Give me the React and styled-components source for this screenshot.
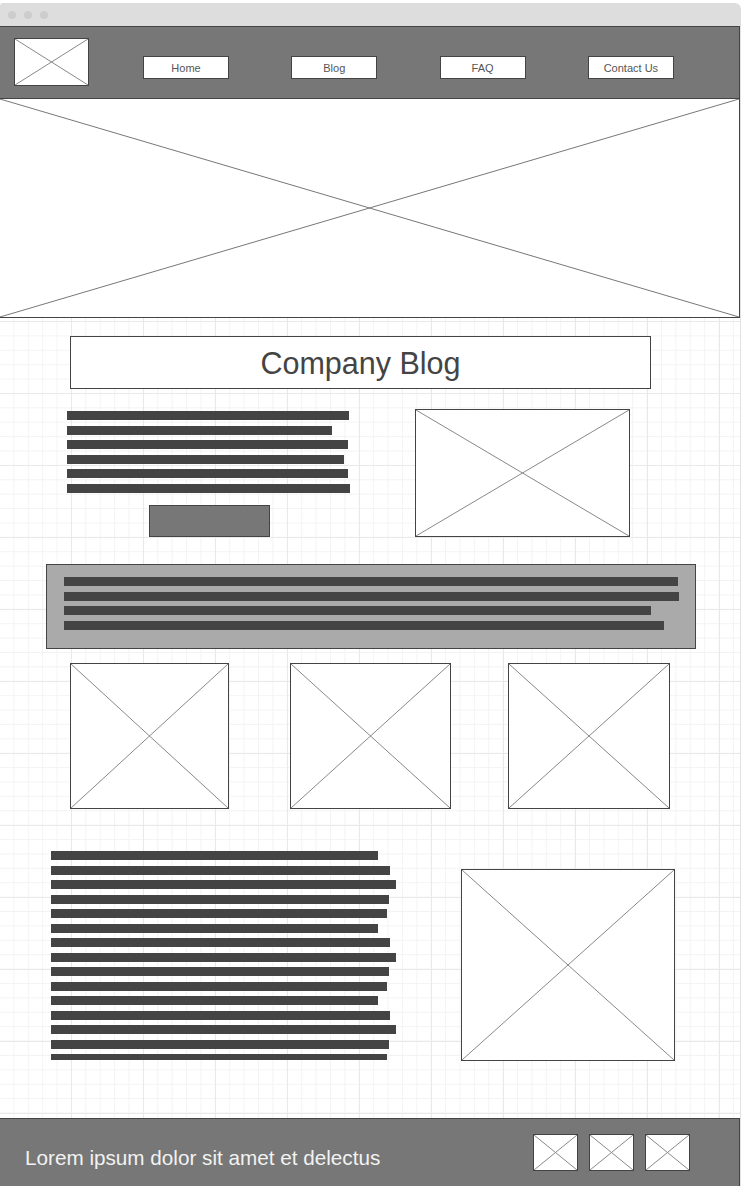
import React from 'react';
import styled, { createGlobalStyle } from 'styled-components';

const GlobalStyle = createGlobalStyle`
  html, body {
    margin: 0;
    padding: 0;
    background: #ffffff;
  }
  body {
    font-family: 'Liberation Sans', Arial, sans-serif;
  }
  * {
    box-sizing: border-box;
  }
`;

const topBars = [282, 265, 281, 277, 281, 283];
const bandBars = [614, 615, 587, 600];
const bottomBars = [327, 339, 345, 338, 336, 327, 339, 345, 338, 336, 327, 339, 345, 338, 336];

const Window = styled.div`
  width: 741px;
  display: flex;
  flex-direction: column;
  padding-top: 3px;
`;

const Chrome = styled.div`
  height: 23px;
  background: #dddddd;
  border-radius: 3px 6px 0 0;
  display: flex;
  align-items: center;
  gap: 8px;
  padding-left: 8px;
`;

const Dot = styled.span`
  width: 8px;
  height: 8px;
  border-radius: 50%;
  background: #cdcdcd;
`;

const Page = styled.div`
  width: 741px;
  border-right: 1px solid #e2e2e2;
  display: flex;
  flex-direction: column;
`;

const Header = styled.header`
  height: 73px;
  background: #777777;
  border: 1px solid #444444;
  border-left: none;
  display: flex;
  align-items: flex-start;
  padding-left: 14px;
`;

const Logo = styled.div`
  width: 75px;
  height: 48px;
  margin-top: 11px;
  margin-right: 54px;
`;

const Nav = styled.nav`
  display: flex;
  gap: 62.3px;
  margin-top: 29px;
`;

const NavButton = styled.div`
  width: 86px;
  height: 23px;
  background: #ffffff;
  border: 1px solid #444444;
  color: #555555;
  font-size: 11px;
  display: flex;
  align-items: center;
  justify-content: center;
`;

const Hero = styled.div`
  height: 219px;
  background: #ffffff;
  border-bottom: 1px solid #444444;
  border-right: 1px solid #444444;
`;

const Canvas = styled.main`
  display: flex;
  flex-direction: column;
  padding: 18px 0 57px;
  background-color: #ffffff;
  background-image:
    linear-gradient(to right, #e9e9e9 1px, transparent 1px),
    linear-gradient(to bottom, #e9e9e9 1px, transparent 1px),
    linear-gradient(to right, #f3f3f3 1px, transparent 1px),
    linear-gradient(to bottom, #f3f3f3 1px, transparent 1px);
  background-size: 72px 72px, 72px 72px, 14.4px 14.4px, 14.4px 14.4px;
  background-position: -1px 3px, -1px 3px, -1px 3px, -1px 3px;
`;

const TitleBox = styled.div`
  margin-left: 70px;
  width: 581px;
  height: 53px;
  background: #ffffff;
  border: 1px solid #444444;
  display: flex;
  align-items: center;
  justify-content: center;
  color: #444444;
  font-size: 30.5px;
  padding-top: 1px;
`;

const IntroRow = styled.section`
  display: grid;
  grid-template-columns: 283px 215px;
  column-gap: 65px;
  margin-top: 20px;
  padding-left: 67px;
`;

const TextColumn = styled.div`
  display: flex;
  flex-direction: column;
  align-items: flex-start;
  gap: ${(p) => p.$gap}px;
  padding-top: ${(p) => p.$top || 0}px;
`;

const Bar = styled.div`
  height: ${(p) => p.$height || 9}px;
  background: #444444;
`;

const ReadMore = styled.div`
  width: 121px;
  height: 32px;
  margin: 6px 0 0 82px;
  background: #777777;
  border: 1px solid #444444;
`;

const Band = styled.section`
  margin: 27px 0 0 46px;
  width: 650px;
  height: 85px;
  background: #aaaaaa;
  border: 1px solid #444444;
  padding: 12px 0 0 17px;
`;

const Gallery = styled.section`
  display: flex;
  align-items: flex-start;
  margin-top: 14px;
  padding-left: 70px;
`;

const StoryRow = styled.section`
  display: grid;
  grid-template-columns: 345px 214px;
  column-gap: 65px;
  align-items: start;
  margin-top: 42px;
  padding-left: 51px;
`;

const Frame = styled.div`
  flex: none;
  width: ${(p) => (p.$w ? `${p.$w}px` : 'auto')};
  height: ${(p) => p.$h}px;
  margin-top: ${(p) => p.$top || 0}px;
  margin-left: ${(p) => p.$left || 0}px;
  background: #ffffff;
  border: 1px solid #444444;
`;

const Footer = styled.footer`
  height: 70px;
  background: #777777;
  border-top: 1px solid #444444;
  border-right: 1px solid #444444;
  display: flex;
  align-items: flex-start;
  justify-content: space-between;
  padding: 0 49px 0 25px;
`;

const FooterText = styled.p`
  margin: 29px 0 0;
  color: #f2f2f2;
  font-size: 20.7px;
  line-height: 20px;
`;

const Socials = styled.div`
  display: flex;
  gap: 11px;
  margin-top: 15px;
`;

function Cross({ color = '#888888' }) {
  return (
    <svg width="100%" height="100%" viewBox="0 0 100 100" preserveAspectRatio="none" style={{ display: 'block' }}>
      <line x1="0" y1="0" x2="100" y2="100" stroke={color} strokeWidth="1" vectorEffect="non-scaling-stroke" />
      <line x1="100" y1="0" x2="0" y2="100" stroke={color} strokeWidth="1" vectorEffect="non-scaling-stroke" />
    </svg>
  );
}

function Placeholder({ w, h, top, left }) {
  return (
    <Frame $w={w} $h={h} $top={top} $left={left}>
      <Cross />
    </Frame>
  );
}

export default function App() {
  return (
    <>
      <GlobalStyle />
      <Window>
        <Chrome>
          <Dot />
          <Dot />
          <Dot />
        </Chrome>
        <Page>
          <Header>
            <Logo>
              <Frame $h={48}>
                <Cross />
              </Frame>
            </Logo>
            <Nav>
              {['Home', 'Blog', 'FAQ', 'Contact Us'].map((label) => (
                <NavButton key={label}>{label}</NavButton>
              ))}
            </Nav>
          </Header>
          <Hero>
            <Cross color="#777777" />
          </Hero>
          <Canvas>
            <TitleBox>Company Blog</TitleBox>
            <IntroRow>
              <TextColumn $gap={5.6} $top={2}>
                {topBars.map((w, i) => (
                  <Bar key={i} style={{ width: w }} />
                ))}
                <ReadMore />
              </TextColumn>
              <Placeholder w={215} h={128} />
            </IntroRow>
            <Band>
              <TextColumn $gap={5.67}>
                {bandBars.map((w, i) => (
                  <Bar key={i} style={{ width: w }} />
                ))}
              </TextColumn>
            </Band>
            <Gallery>
              <Placeholder w={159} h={146} />
              <Placeholder w={161} h={146} left={61} />
              <Placeholder w={162} h={146} left={57} />
            </Gallery>
            <StoryRow>
              <TextColumn $gap={5.5}>
                {bottomBars.map((w, i) => (
                  <Bar key={i} $height={i === bottomBars.length - 1 ? 6 : 9} style={{ width: w }} />
                ))}
              </TextColumn>
              <Placeholder w={214} h={192} top={18} />
            </StoryRow>
          </Canvas>
          <Footer>
            <FooterText>Lorem ipsum dolor sit amet et delectus</FooterText>
            <Socials>
              <Placeholder w={45} h={37} />
              <Placeholder w={45} h={37} />
              <Placeholder w={45} h={37} />
            </Socials>
          </Footer>
        </Page>
      </Window>
    </>
  );
}
